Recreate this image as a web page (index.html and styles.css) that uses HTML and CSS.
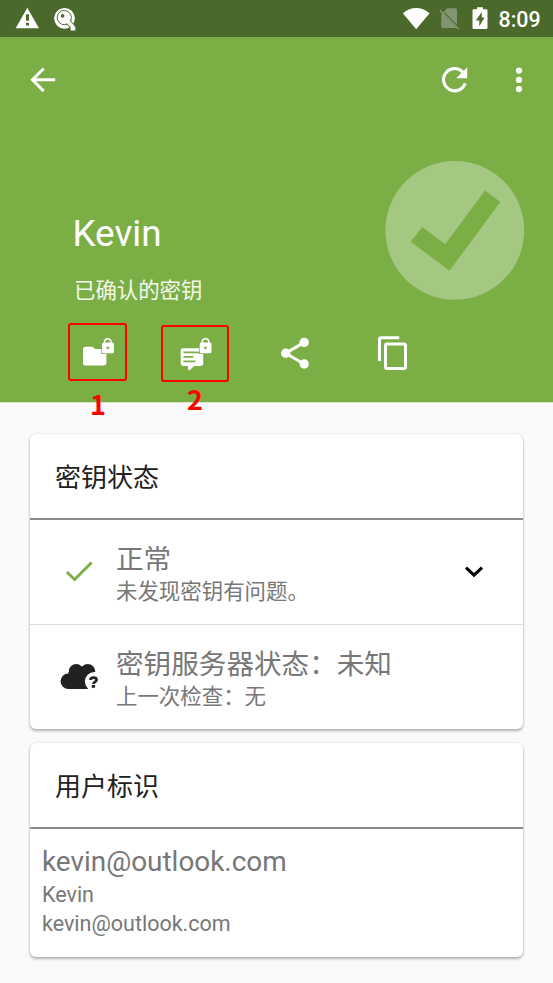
FILE: index.html
```
<!DOCTYPE html>
<html lang="zh-CN">
<head>
<meta charset="utf-8">
<title>Kevin</title>
<link rel="stylesheet" href="styles.css">
</head>
<body>
<div class="statusbar">
  <svg class="s-warn" width="24" height="22" viewBox="15 7 24 22"><path fill="#fff" d="M27.3 7.800 39 28.300H15.700Z"/><path fill="#4b692b" d="M26 14.300h3v6.500h-3zM26 22.800h3v2.800h-3z"/></svg>
  <svg class="s-key" width="24" height="26" viewBox="53 7 24 26"><circle cx="64.500" cy="18.300" r="10.400" fill="#fff"/><circle cx="64.300" cy="17.600" r="7.100" fill="none" stroke="#4b692b" stroke-width="1"/><path d="M68 21.500 74 28.500" stroke="#4b692b" stroke-width="5.500"/><path d="M67 20.500 72.500 26.500V28.500H75.300" fill="none" stroke="#fff" stroke-width="3.800"/><circle cx="64.300" cy="17.600" r="6.200" fill="#fff"/><circle cx="62.600" cy="15.900" r="1.800" fill="#4b692b"/></svg>
  <span class="spacer"></span>
  <svg class="s-wifi" width="28" height="22" viewBox="402 7 28 22"><path fill="#fff" d="M402.800 13.200Q409 8 416.200 8T429.600 13.200L416.200 29.200Z"/></svg>
  <svg class="s-sim" width="20" height="23" viewBox="439 7 20 23"><path fill="#819570" d="M441.300 14.500 447 8.300H455.500Q457 8.300 457 10V24.800L444.800 12.500 443.600 13.700 457 27.200Q456.500 28 455.500 28H443Q441.300 28 441.300 26.200Z"/><path d="M440 10.400 458.700 29.200" stroke="#819570" stroke-width="1.700"/></svg>
  <svg class="s-bat" width="16" height="23" viewBox="472.500 7 16 23"><path fill="#fff" d="M477.500 7.200h6v2h3.200q1.300 0 1.300 1.300v17.200q0 1.300-1.300 1.300h-12.400q-1.300 0-1.300-1.300v-17.200q0-1.300 1.300-1.300h3.200z"/><path fill="#4b692b" d="M482.300 12 476.300 20.600h3.500v5.700l5.300-8.700h-2.800z"/></svg>
  <span class="clock">8:09</span>
</div>
<header class="hero">
  <div class="toolbar">
    <svg width="26" height="26" viewBox="30 67 26 26"><path d="M55.200 79.800H33M43.700 68.500 32.500 79.800 43.700 91.100" fill="none" stroke="#fff" stroke-width="3"/></svg>
    <span class="spacer"></span>
    <svg width="28" height="28" viewBox="441 66 28 28"><path d="M465.200 83.200A11.100 11.100 0 1 1 462.500 71.800L464 73.400" fill="none" stroke="#fff" stroke-width="3.100"/><path fill="#fff" d="M467.200 67.300V78.300H456.200Z"/></svg>
    <svg class="more" width="8" height="26" viewBox="515 67 8 26"><g fill="#fff"><circle cx="519" cy="70.600" r="3.100"/><circle cx="519" cy="79.900" r="3.100"/><circle cx="519" cy="89.100" r="3.100"/></g></svg>
  </div>
  <div class="identity">
    <div class="who">
      <h1>Kevin</h1>
      <p>已确认的密钥</p>
    </div>
    <svg width="140" height="140" viewBox="385 161 140 140"><circle cx="454.800" cy="230.400" r="69.400" fill="#a4c882"/><path fill="#7cae46" d="M410.700 241.700 422.300 227 445.200 244.300 485 190.600 500.300 202 449.500 270.700Z"/></svg>
  </div>
  <div class="actions">
    <div class="action marked file">
      <svg width="32" height="34" viewBox="82 337 32 34"><path fill="#fff" d="M83 349.200q0-2.500 2.500-2.500h6.800l2.800 2.300h9q2.300 0 2.300 2.400v11.700q0 2.400-2.500 2.400h-18.400q-2.500 0-2.500-2.500z"/><path fill="#7cae46" d="M101.300 342h5v12h-5z"/><rect x="102" y="342.500" width="11.900" height="10.700" rx="1.500" fill="#fff"/><path d="M104.500 343.500v-1.500a3.300 3.300 0 0 1 6.600 0v1.500" fill="none" stroke="#fff" stroke-width="1.500"/><circle cx="107.800" cy="347.800" r="1.400" fill="#7cae46"/></svg>
      <span class="label">1</span>
    </div>
    <div class="action marked text">
      <svg width="32" height="34" viewBox="180.500 337 32 34"><path fill="#fff" d="M181.200 350.500q0-2.300 2.300-2.300h20.200v15.400q0 2.400-2.400 2.400H194.500l-4 4.100h-2V366h-5q-2.300 0-2.300-2.400z"/><path d="M184 352.400h16.500M184 356.900h9.800M184 361.300h12" stroke="#7cae46" stroke-width="1.700"/><path fill="#7cae46" d="M199.500 347h4.200v6.900h-4.200z"/><rect x="200.200" y="342.500" width="11.800" height="10.700" rx="1.500" fill="#fff"/><path d="M202.700 343.500v-1.500a3.300 3.300 0 0 1 6.600 0v1.500" fill="none" stroke="#fff" stroke-width="1.500"/><circle cx="206" cy="347.800" r="1.400" fill="#7cae46"/></svg>
      <span class="label">2</span>
    </div>
    <svg class="share" width="30" height="34" viewBox="280 336 30 34"><path d="M304.200 342.400 285.600 353.300 304.200 364" fill="none" stroke="#fff" stroke-width="3"/><g fill="#fff"><circle cx="304.200" cy="342.400" r="4.700"/><circle cx="285.700" cy="353.300" r="4.700"/><circle cx="304.200" cy="364" r="4.700"/></g></svg>
    <svg class="copy" width="30" height="36" viewBox="378 335 30 36"><path d="M399.200 337.700H381Q379.500 337.700 379.500 339.200V361" fill="none" stroke="#fff" stroke-width="3"/><rect x="385.500" y="344" width="20" height="24.500" rx="1.500" fill="none" stroke="#fff" stroke-width="3"/></svg>
  </div>
</header>
<main>
  <section class="card">
    <h2>密钥状态</h2>
    <div class="row">
      <svg class="lead" width="40" height="28" viewBox="59 558 40 28"><path d="M66.900 572 74.600 579.500 91.600 562.500" fill="none" stroke="#7cae46" stroke-width="2.800"/></svg>
      <div class="copybox"><p class="big">正常</p><p class="small">未发现密钥有问题。</p></div>
      <svg class="chev" width="20" height="14" viewBox="464 565 20 14"><path d="M466 567.700 474 575.200 482 567.700" fill="none" stroke="#000" stroke-width="3"/></svg>
    </div>
    <div class="row second">
      <svg class="lead" width="40" height="28" viewBox="59.300 663 40 28"><g fill="#212121"><circle cx="68.700" cy="681.200" r="7.800"/><circle cx="76.500" cy="671.500" r="7.400"/><circle cx="88" cy="671.500" r="7.500"/><path d="M68.700 672H95v17H68.700z"/></g><circle cx="94.700" cy="681.500" r="9.500" fill="#fff"/><path d="M90.700 680Q90.900 677.700 93.800 677.700T96.900 679.800C96.900 682 93.700 681.700 93.700 684M92 686.400H95.400" fill="none" stroke="#212121" stroke-width="2.700"/></svg>
      <div class="copybox"><p class="big">密钥服务器状态：未知</p><p class="small">上一次检查：无</p></div>
    </div>
  </section>
  <section class="card users">
    <h2>用户标识</h2>
    <div class="user"><p class="mail">kevin@outlook.com</p><p class="detail">Kevin</p><p class="detail">kevin@outlook.com</p></div>
  </section>
</main>
</body>
</html>
```
FILE: styles.css
```
* { box-sizing: border-box; }
html { overflow: hidden; }
body { margin: 0; width: 553px; height: 983px; background: #fafafa; color: #777; font-family: "Noto Sans CJK SC", sans-serif; overflow: hidden; }
h1, h2, p { margin: 0; font-weight: 400; white-space: nowrap; }
svg { display: block; flex: none; }
.spacer { flex: 1; }
.statusbar { display: flex; align-items: flex-start; height: 37px; padding: 7px 12px 0 15px; background: #4b692b; }
.s-key { margin-left: 14px; }
.s-sim { margin-left: 9px; }
.s-bat { margin-left: 13px; }
.clock { margin-left: 10.500px; width: 42.500px; color: #fff; font: 500 21.400px/26px Roboto, sans-serif; }
.hero { height: 366px; background: #7cae46; border-bottom: 1px solid #d8e5c9; }
.toolbar { display: flex; align-items: center; height: 86px; padding: 0 30px; }
.more { margin-left: 46px; }
.identity { display: flex; justify-content: space-between; height: 200px; padding: 38px 28px 0 72px; }
.who h1 { margin: 51px 0 0 .5px; color: #fff; font: 400 36.800px/44px Roboto, sans-serif; }
.who p { margin: 17px 0 0 2px; color: #f3f8ed; font-size: 21.400px; line-height: 32px; }
.actions { display: flex; align-items: flex-start; padding-left: 68px; }
.action { position: relative; border: 2px solid #f00; border-radius: 3px; }
.file { width: 59px; height: 58px; padding: 12px 0 0 12px; }
.text { width: 68px; height: 57px; margin: 2px 0 0 34px; padding: 10px 0 0 17px; }
.label { position: absolute; color: #f00; font-size: 27px; font-weight: 700; line-height: 28px; }
.file .label { left: 20px; top: 65px; }
.text .label { left: 24px; top: 58px; }
.share { margin: 13px 0 0 51px; }
.copy { margin: 12px 0 0 68px; }
main { display: grid; gap: 14px; padding: 31px 30px 0; }
.card { height: 295px; border-radius: 6px; background: #fff; box-shadow: 0 2px 3px rgba(0,0,0,.28), 0 0 2px rgba(0,0,0,.16); }
.users { height: 214px; }
h2 { height: 86px; padding: 0 25px; border-bottom: 2px solid #8b8b8b; color: #212121; font-size: 26px; line-height: 83px; }
.row { display: flex; align-items: center; height: 105px; padding: 0 39px 0 29px; border-bottom: 1px solid #dcdcdc; }
.second { height: 104px; border: 0; }
.copybox { flex: 1; margin: 2px 0 0 17px; }
.big { font-size: 27.600px; line-height: 34px; }
.small { font-size: 21.450px; line-height: 32px; }
.user { padding: 15px 12px; font-family: Roboto, sans-serif; }
.mail { font-size: 27.900px; line-height: 36px; }
.detail { font-size: 21.500px; line-height: 29px; }
```
